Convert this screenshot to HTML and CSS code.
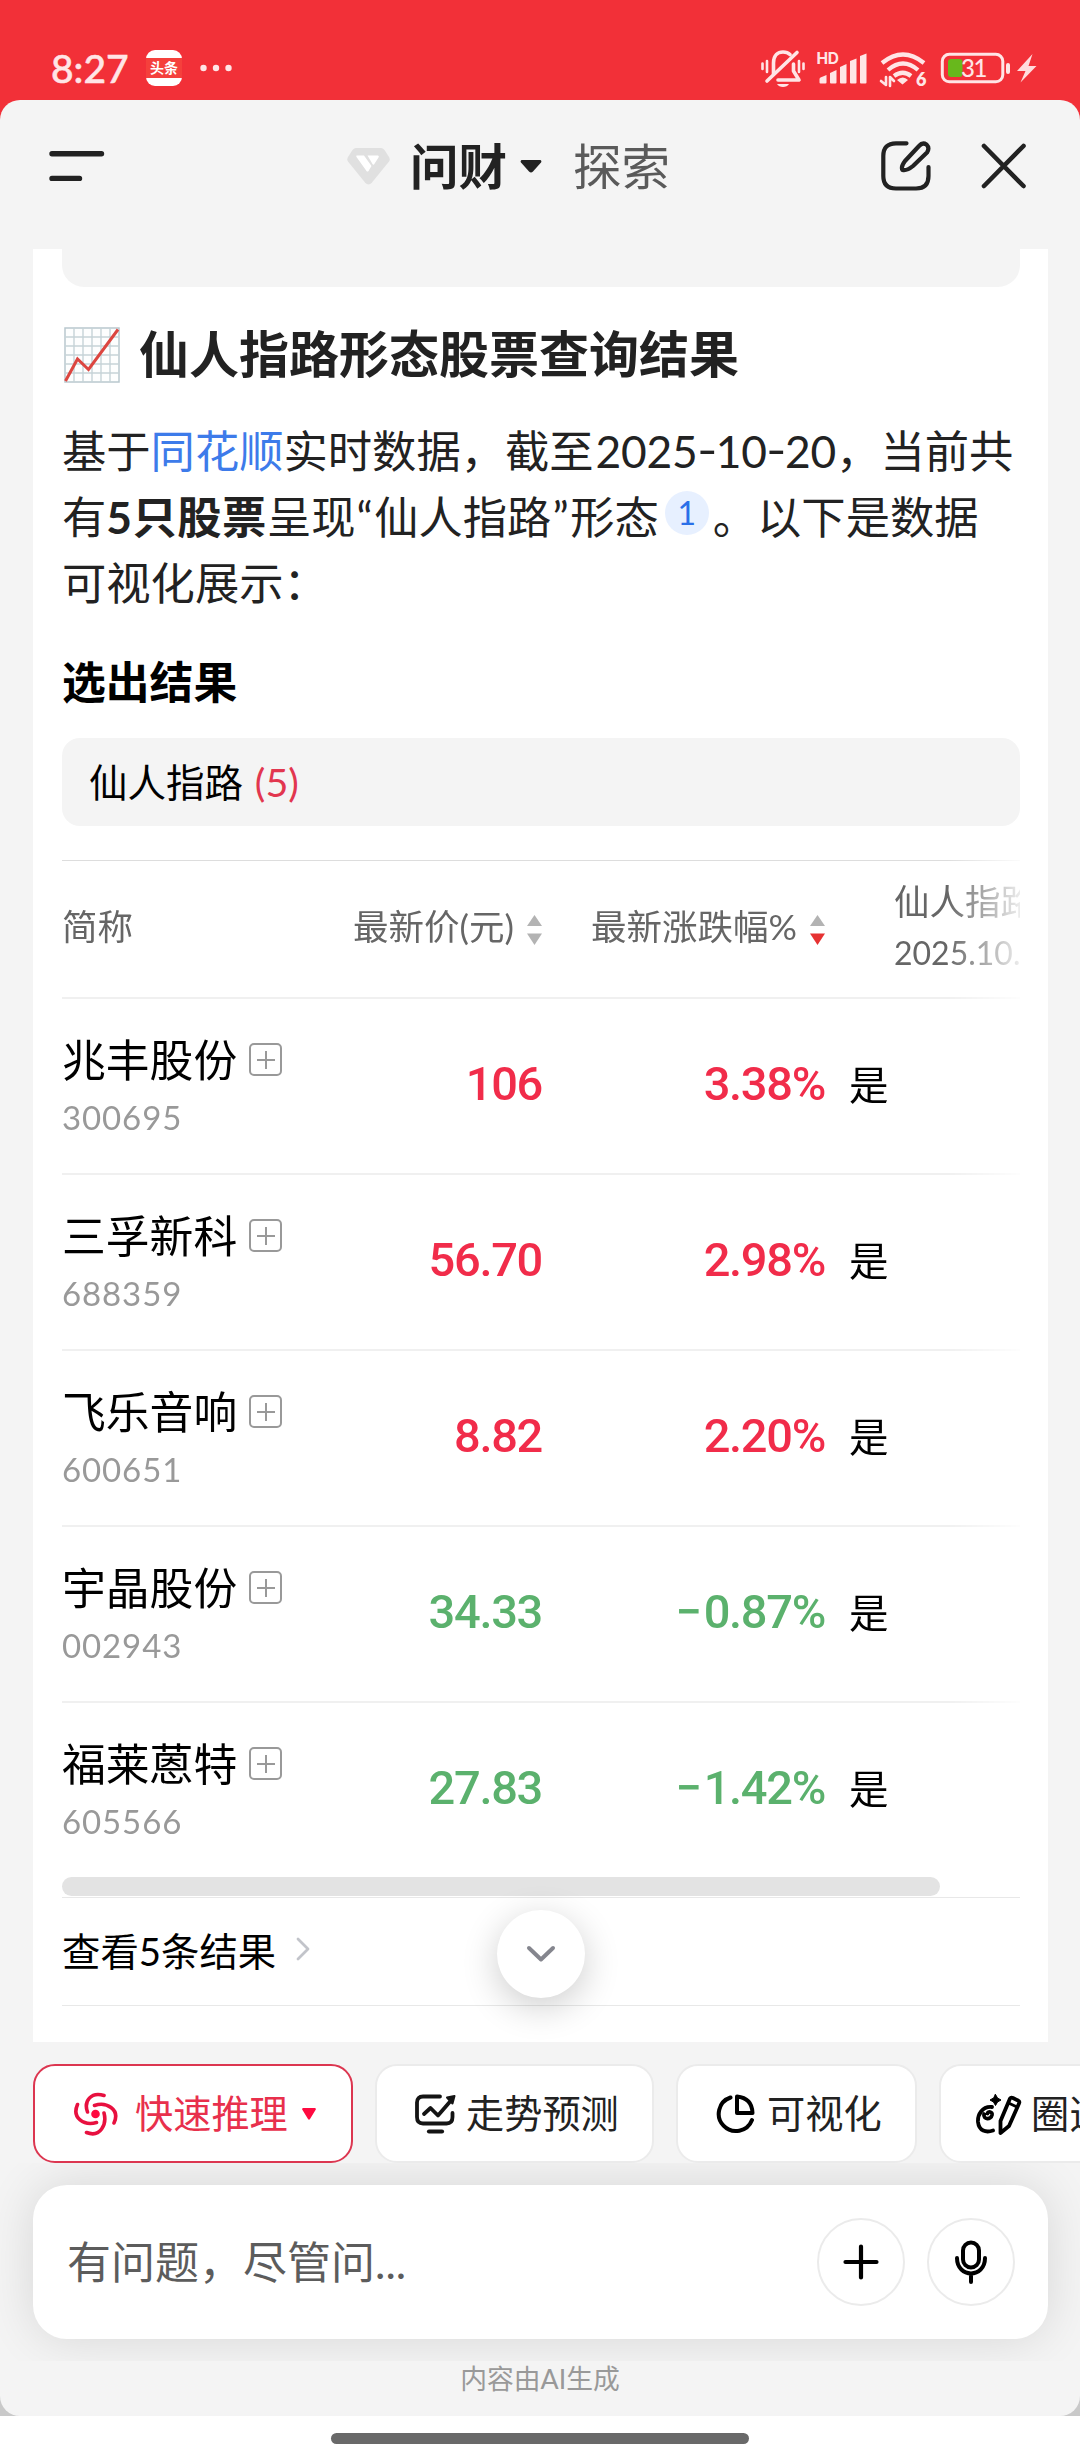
FILE: index.html
```html
<!DOCTYPE html>
<html lang="zh-CN">
<head>
<meta charset="utf-8">
<title>问财</title>
<link rel="stylesheet" href="styles.css">
</head>
<body>
<div class="status">
  <span class="time">8:27</span>
  <span class="app-badge"><b>头条</b></span>
  <svg class="dots" width="32" height="8" viewBox="0 0 32 8" fill="#ffe5e6"><circle cx="3.5" cy="4" r="3.2"/><circle cx="16" cy="4" r="3.2"/><circle cx="28.500" cy="4" r="3.2"/></svg>
  <svg class="sys" width="280" height="48" viewBox="760 44 280 48" fill="none" stroke="#ffe5e6" stroke-width="3.6" stroke-linecap="round" stroke-linejoin="round">
    <path d="M773.500 74V63C773.500 55 778 52 783 52C786 52 788.500 53 790 54.500"/>
    <path d="M767 81L797 52.500"/>
    <path d="M793.500 64V71L799 80H778"/>
    <path d="M777 84H789C787 88 779 88 777 84Z" fill="#ffe5e6" stroke="none"/>
    <path d="M762.500 63.500V69M767 61V72M799 61V72M803.500 63.500V69" stroke-width="2.600"/>
    <g fill="#ffe5e6" stroke="none">
      <text x="816.500" y="64" class="t-hd">HD</text>
      <path d="M819.500 79Q819.500 78 820.500 77.500L826.500 75V82.500Q826.500 83.500 825.500 83.500H820.500Q819.500 83.500 819.500 82.500Z"/>
      <path d="M830 73L836.500 70V82.500Q836.500 83.500 835.500 83.500H831Q830 83.500 830 82.500Z"/>
      <path d="M840 67L846.500 64V82.500Q846.500 83.500 845.500 83.500H841Q840 83.500 840 82.500Z"/>
      <path d="M850 61L856.500 58.500V82.500Q856.500 83.500 855.500 83.500H851Q850 83.500 850 82.500Z"/>
      <path d="M860 56L866.500 53.500V82.500Q866.500 83.500 865.500 83.500H861Q860 83.500 860 82.500Z"/>
      <path d="M897 80Q903 75 908 80L902.500 84.500Z"/>
      <path d="M1032.500 54L1017 71H1025.500L1020.500 82.500L1036.500 66H1028.500Z" fill="#ffdcdd"/>
      <rect x="1006" y="63" width="4" height="11" rx="2"/>
      <rect x="948" y="59" width="14.500" height="18" rx="3" fill="#68b81c"/>
      <text x="961" y="76.500" class="t-bat">31</text>
      <text x="916" y="86" class="t-wifi">6</text>
    </g>
    <path d="M882 63Q903 46 924 63M888 70Q903 57 918 70M894 76Q903 69.500 911 76" stroke-width="4.200" stroke-linecap="butt"/>
    <path d="M886 77V85L881 81M890 86V77L894 81" stroke-width="2.600"/>
    <rect x="942.300" y="54.300" width="60.500" height="27.500" rx="7" stroke-width="3"/>
  </svg>
</div>

<div class="sheet-wrap">
<main class="sheet">
  <header class="top">
    <svg class="menu" width="56" height="32" viewBox="0 0 56 32" stroke="#222" stroke-width="5.400" stroke-linecap="round"><path d="M3 3.700H52.500M3 28.400H30.500"/></svg>
    <svg class="gem" width="43" height="37" viewBox="0 0 43 37"><path d="M9 0H34Q36 0 37.500 2L42 9Q43.500 11.500 42 13.500L25 34.500Q21.500 38.500 18 34.500L1 13.500Q-.5 11.500 1 9L5.500 2Q7 0 9 0Z" fill="#e0e0e0"/><path d="M9.500 7.500H17L24.500 18L21.500 23Q20.500 24 19.500 23L9.500 9Q9 8 9.500 7.500ZM20.500 7.500H31Q32.500 8 31.500 9.500L27 16.500Q26 17 25.500 16Z" fill="#fff"/></svg>
    <b class="brand">问财</b>
    <svg class="caret" width="22" height="13" viewBox="0 0 22 13"><path d="M1.500 0H20.500Q22 1 21 2.500L13 11.500Q11 13.500 9 11.500L1 2.500Q0 1 1.500 0Z" fill="#222"/></svg>
    <span class="explore">探索</span>
    <svg class="edit" width="50" height="50" viewBox="0 0 50 50" fill="none" stroke="#222" stroke-width="4.200" stroke-linecap="round" stroke-linejoin="round"><path d="M25.500 2.300H15Q2.300 2.300 2.300 15V35Q2.300 47.500 15 47.500H35Q47.500 47.500 47.500 35V26"/><path d="M21.500 29Q19.500 26 24 20L38 5Q41.500 1 45.500 3.500Q49 7 46 11.500L32 25Q26 30 21.500 29Z"/></svg>
    <svg class="close" width="46" height="46" viewBox="0 0 46 46" stroke="#222" stroke-width="4.600" stroke-linecap="round"><path d="M3 3L42.500 43M42.500 3L3 43"/></svg>
  </header>

  <article class="card">
    <div class="bubble-end"></div>
    <h2 class="title">
      <svg class="chart" width="56" height="56" viewBox="0 0 56 56" fill="none"><rect x="1" y="1" width="54" height="54" fill="#fdfefe" stroke="#b9c8ce" stroke-width="1.500"/><path d="M10 1V55M19 1V55M28 1V55M37 1V55M46 1V55M1 10H55M1 19H55M1 28H55M1 37H55M1 46H55" stroke="#c6d3d8" stroke-width="1.400"/><path d="M1.500 54L13.500 32L24.500 42.500L54 2.500" stroke="#dc4640" stroke-width="3"/></svg>
      <span>仙人指路形态股票查询结果</span>
    </h2>
    <p class="intro">基于<a class="link">同花顺</a>实时数据，截至<span class="date">2025<i>-</i>10<i>-</i>20</span>，当前共<br>有<b>5只股票</b>呈现<span class="quote">“</span>仙人指路<span class="quote">”</span>形态<span class="cite">1</span>。以下是数据<br>可视化展示：</p>
    <h3 class="picked">选出结果</h3>
    <div class="filter">仙人指路 <span>(5)</span></div>

    <div class="table">
      <div class="row head">
        <div class="c1">简称</div>
        <div class="c2">最新价(元)<svg class="sort" width="15" height="30" viewBox="0 0 15 30"><path d="M0 11L7.500 0L15 11Z" fill="#b3b3b3"/><path d="M0 18.500H15L7.500 30Z" fill="#b3b3b3"/></svg></div>
        <div class="c3">最新涨跌幅%<svg class="sort" width="15" height="30" viewBox="0 0 15 30"><path d="M0 11L7.500 0L15 11Z" fill="#b3b3b3"/><path d="M0 18.500H15L7.500 30Z" fill="#e63232"/></svg></div>
        <div class="c4">仙人指路<br><span>2025.10.20</span></div>
      </div>
      <div class="row up">
        <div class="c1"><div class="name">兆丰股份<i class="add"></i></div><div class="code">300695</div></div>
        <div class="c2">106</div><div class="c3">3.38%</div><div class="c4">是</div>
      </div>
      <div class="row up">
        <div class="c1"><div class="name">三孚新科<i class="add"></i></div><div class="code">688359</div></div>
        <div class="c2">56.70</div><div class="c3">2.98%</div><div class="c4">是</div>
      </div>
      <div class="row up">
        <div class="c1"><div class="name">飞乐音响<i class="add"></i></div><div class="code">600651</div></div>
        <div class="c2">8.82</div><div class="c3">2.20%</div><div class="c4">是</div>
      </div>
      <div class="row down">
        <div class="c1"><div class="name">宇晶股份<i class="add"></i></div><div class="code">002943</div></div>
        <div class="c2">34.33</div><div class="c3"><span class="minus">−</span>0.87%</div><div class="c4">是</div>
      </div>
      <div class="row down last">
        <div class="c1"><div class="name">福莱蒽特<i class="add"></i></div><div class="code">605566</div></div>
        <div class="c2">27.83</div><div class="c3"><span class="minus">−</span>1.42%</div><div class="c4">是</div>
      </div>
    </div>
    <div class="scrollbar"></div>
    <div class="more">查看5条结果<svg width="14" height="24" viewBox="0 0 14 24" fill="none" stroke="#c2c4ca" stroke-width="2.800" stroke-linecap="round" stroke-linejoin="round"><path d="M2 2L12 12L2 22"/></svg></div>
    <div class="jump"><svg width="30" height="18" viewBox="0 0 30 18" fill="none" stroke="#85868e" stroke-width="4" stroke-linecap="round" stroke-linejoin="round"><path d="M3 3L15 14.500L27 3"/></svg></div>
  </article>

  <nav class="chips">
    <div class="chip hot">
      <svg width="44" height="44" viewBox="0 0 44 44" fill="none" stroke="#e8103f" stroke-width="3.600" stroke-linecap="round"><circle cx="21.500" cy="22" r="4.300" fill="#ff0a40" stroke="none"/><path d="M13.500 20C9.500 9 17 -.5 30 3.500"/><path d="M20.500 13.500C32 9.500 46.500 17 40 31"/><path d="M30 21C33 32 26.500 46 12.500 40.500"/><path d="M22.500 30.500C10 34 -2.500 26 3.500 12.500"/></svg>
      <span>快速推理</span>
      <svg class="tri" width="14" height="12" viewBox="0 0 14 12"><path d="M1 0H13Q14.500 .5 13.500 2L8 11Q7 12.500 6 11L.5 2Q-.5 .5 1 0Z" fill="#ff0a40"/></svg>
    </div>
    <div class="chip c-trend">
      <svg width="43" height="42" viewBox="0 0 43 42" fill="none" stroke="#141414" stroke-width="3.800" stroke-linecap="round" stroke-linejoin="round"><path d="M26 3.500H9Q3 3.500 3 9.500V24Q3 30.500 9 30.500H32.500Q38.500 30.500 38.500 24V20"/><path d="M10 21L16.500 15L24 22.500L37 7.500"/><path d="M33 4.500L40.500 3L38.500 10.500Z" fill="#141414" stroke-width="2"/><path d="M15 38.500H28" stroke-width="4.200"/></svg>
      <span>走势预测</span>
    </div>
    <div class="chip c-pie">
      <svg width="39" height="40" viewBox="0 0 39 40" fill="none" stroke="#000" stroke-width="4" stroke-linecap="round" stroke-linejoin="round"><path d="M14.500 3.500A17.200 17.200 0 1 0 36 26"/><path d="M21 2.500Q36 4 36.500 19H21Z"/></svg>
      <span>可视化</span>
    </div>
    <div class="chip c-draw">
      <svg width="46" height="42" viewBox="0 0 46 42" fill="none" stroke="#000" stroke-width="3.800" stroke-linecap="round" stroke-linejoin="round"><path d="M19.500 1.500L21.500 5L25 7L21.500 9L19.500 12.500L17.500 9L14 7L17.500 5Z" fill="#000" stroke-width="1"/><path d="M16 14C6 13 1.500 22 2 29C3 38 10 40 17 37.500"/><path d="M8 21C7 27 15 27 16 22C16.500 18.500 12 18 11.500 20.500"/><path d="M34 5.500Q35 4 37 5L42 7.500Q44 8.500 43 10.500L33 33L24.500 40L24.500 28Z"/><path d="M32.500 10L41 14" stroke-width="3"/></svg>
      <span>圈选</span>
    </div>
  </nav>

  <section class="compose-zone">
    <div class="composer">
      <span>有问题，尽管问...</span>
      <div class="round"><svg width="36" height="36" viewBox="0 0 36 36" stroke="#000" stroke-width="4.200" stroke-linecap="round"><path d="M18 2.500V33.500M2.500 18H33.500"/></svg></div>
      <div class="round"><svg width="34" height="44" viewBox="0 0 34 44" fill="none" stroke="#000" stroke-width="4" stroke-linecap="round"><rect x="9" y="2.500" width="16" height="25" rx="8"/><path d="M3 18C3 38.500 31 38.500 31 18M17 35V42"/></svg></div>
    </div>
  </section>
  <footer class="foot">内容由AI生成</footer>
</main>
</div>
<div class="home"></div>
</body>
</html>
```
FILE: styles.css
```css
* { box-sizing: border-box; }
body {
  margin: 0;
  width: 1080px;
  height: 2460px;
  overflow: hidden;
  background: #fff;
  font-family: Lato, "Noto Sans CJK SC", sans-serif;
  color: #222;
}
svg { display: block; flex: none; }

.status { display: flex; align-items: center; height: 120px; padding: 16px 0 0 51px; margin-bottom: -20px; background: #f23038; color: #ffe5e6; }
.time { width: 95px; font-size: 39px; line-height: 48px; font-weight: 500; white-space: nowrap; -webkit-text-stroke: .5px #ffe5e6; }
.app-badge { display: flex; align-items: center; width: 36px; height: 36px; border-radius: 9px; background: linear-gradient(#fff 8px, #f5403c 8px 28px, #fff 28px); }
.app-badge b { width: 36px; text-align: center; font-size: 14px; line-height: 20px; color: #fff; }
.dots { margin-left: 18px; }
.sys { margin-left: 528px; }
.t-hd { font: 700 15.5px Inter, sans-serif; letter-spacing: -.3px; }
.t-bat { font: 500 24px Lato, sans-serif; letter-spacing: -1.5px; }
.t-wifi { font: 800 18px Lato, sans-serif; }

.sheet-wrap { background: linear-gradient(#f23038 0 50%, #c9c9c9 50%); }
.sheet { height: 2316px; border-radius: 20px; background: #f4f4f4; overflow: hidden; }

.top { display: flex; align-items: center; height: 149px; padding: 0 53px 17px 49px; }
.gem { margin-left: 242px; }
.brand { margin-left: 20px; width: 101px; font-size: 48.500px; line-height: 64px; white-space: nowrap; }
.caret { margin-left: 9px; }
.explore { margin-left: 31px; font-size: 48.500px; line-height: 64px; color: #5a5a5a; }
.edit { margin-left: auto; }
.close { margin-left: 50px; }

.card { position: relative; width: 1015px; height: 1793px; margin-left: 33px; padding: 0 28px 0 29px; background: #fff; }
.bubble-end { height: 38px; border-radius: 0 0 22px 22px; background: #f4f4f4; }
.title { display: flex; align-items: center; gap: 19px; height: 68px; margin: 34px 0 0 2px; font-size: 50px; line-height: 68px; }
.title span { padding-bottom: 3px; }
.intro { height: 198px; margin: 29px -20px 0 0; font-size: 44.300px; line-height: 66px; white-space: nowrap; }
.intro b { letter-spacing: .5px; }
.link { color: #3d7bea; }
.date { margin-left: 2px; letter-spacing: -.2px; }
.date i { display: inline-block; font-style: normal; margin: 0 1px; transform: translateY(-2px) scaleX(1.25); }
.quote { margin: 0 1.500px 0 1px; }
.cite { display: inline-block; width: 44px; height: 44px; margin: 0 4px 0 6px; border-radius: 50%; background: #e7f0ff; color: #2a6fe8; font-size: 32px; line-height: 44px; text-align: center; vertical-align: 9px; }
.picked { margin: 36px 0 0; font-size: 43.800px; line-height: 60px; color: #000; }
.filter { height: 88px; margin-top: 26px; padding-left: 27px; border-radius: 18px; background: #f4f4f4; font-size: 38.500px; line-height: 88px; color: #000; }
.filter span { color: #e2364f; margin-left: 2px; font-size: 39.500px; }

.table { height: 1018px; margin-top: 34px; border-top: 1px solid #ddd; overflow: hidden; mask-image: linear-gradient(to right, #000 885px, rgba(0,0,0,.12) 958px); }
.row { display: grid; grid-template-columns: 264px 217px 282px 195px; height: 176px; align-items: center; border-bottom: 2px solid #f0f0f0; padding-bottom: 6px; }
.last { border-bottom: 0; padding-bottom: 8px; }
.head { height: 138px; padding-bottom: 4px; font-size: 35.500px; line-height: 50px; color: #666; white-space: nowrap; }
.head .c2, .head .c3 { display: flex; align-items: center; justify-content: flex-end; }
.head .c2 { padding-right: 1px; }
.head .c4 { padding-left: 69px; }
.head .c4 span { font-size: 32px; }
.sort { margin-left: 13px; margin-top: 5px; }
.name { display: flex; align-items: center; font-size: 43.800px; line-height: 60px; color: #000; white-space: nowrap; }
.add { width: 33px; height: 33px; margin-left: 12px; border: 2.500px solid #999; border-radius: 5px; background: linear-gradient(#999, #999) center / 18px 2px no-repeat, linear-gradient(#999, #999) center / 2px 18px no-repeat; }
.code { margin-top: 7px; font-size: 33px; line-height: 40px; letter-spacing: .9px; color: #999; }
.row:not(.head) .c2, .row:not(.head) .c3 { font-family: Roboto, sans-serif; font-size: 47px; font-weight: 500; text-align: right; letter-spacing: -1.300px; }
.row:not(.head) .c2 { padding-right: 1px; }
.row:not(.head) .c4 { padding: 0 0 2px 24px; font-size: 39.500px; color: #000; }
.up .c2, .up .c3 { color: #f12c4a; }
.down .c2, .down .c3 { color: #5bb16d; }
.minus { margin-right: 3px; }

.scrollbar { width: 878px; height: 19px; margin-top: -1px; border-radius: 10px; background: #e3e3e3; }
.more { display: flex; align-items: center; gap: 20px; height: 109px; margin-top: 1px; padding-bottom: 5px; border: solid #e8e8e8; border-width: 1px 0; font-size: 38.400px; color: #000; }
.jump { position: absolute; left: 464px; top: 1661px; display: flex; align-items: center; justify-content: center; width: 88px; height: 88px; border-radius: 50%; background: #fff; box-shadow: 0 9px 36px rgba(0,0,0,.2); }

.chips { display: flex; gap: 22px; height: 121px; padding: 22px 0 0 33px; }
.chip { display: flex; flex: none; align-items: center; height: 99px; border: 2px solid #ebebeb; border-radius: 22px; background: #fff; font-size: 38.200px; line-height: 56px; }
.chip span { padding-bottom: 2px; }
.hot { width: 320px; padding-left: 39px; border-color: #dc3650; color: #e8304c; }
.hot span { margin: 0 14px 0 17px; }
.c-trend { width: 279px; padding-left: 37px; gap: 9px; }
.c-pie { width: 241px; padding-left: 38px; gap: 12px; }
.c-draw { width: 222px; padding-left: 35px; gap: 9px; }

.compose-zone { height: 198px; padding: 22px 32px 0 33px; overflow: hidden; }
.composer { display: flex; align-items: center; height: 154px; padding: 0 33px 0 34px; border-radius: 34px; background: #fff; box-shadow: 0 0 50px rgba(0,0,0,.12); font-size: 44px; color: #5c5c5c; }
.composer > span { flex: 1; padding-bottom: 5px; }
.round { display: flex; align-items: center; justify-content: center; width: 88px; height: 88px; margin-left: 22px; border: 2px solid #ebebeb; border-radius: 50%; }
.foot { font-size: 26.800px; line-height: 36px; text-align: center; color: #999; }
.home { width: 418px; height: 11px; margin: 17px auto 0; border-radius: 6px; background: #696969; }
```
